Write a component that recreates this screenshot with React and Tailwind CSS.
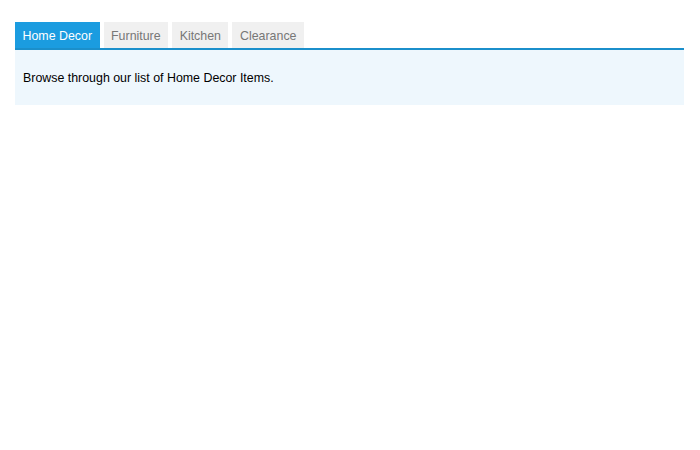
import React, { useState } from "react";

const tabs = [
  { id: "home", label: "Home Decor", text: "Browse through our list of Home Decor Items." },
  { id: "furniture", label: "Furniture", text: "Browse through our list of Furniture." },
  { id: "kitchen", label: "Kitchen", text: "Browse through our list of Kitchen Items." },
  { id: "clearance", label: "Clearance", text: "Browse through our Clearance Items." },
];

export default function App() {
  const [active, setActive] = useState("home");
  const current = tabs.find((t) => t.id === active);

  return (
    <div className="min-h-screen bg-white pl-[15px] pr-[16px] pt-[22px] font-['Liberation_Sans',Arial,sans-serif]">
      {/* tab bar */}
      <div className="flex gap-1 border-b-2 border-[#1b8fcb]">
        {tabs.map((t) => (
          <button
            key={t.id}
            onClick={() => setActive(t.id)}
            className={
              t.id === active
                ? "h-[26px] px-[7.5px] pt-[2px] text-[12.4px] bg-[#1b9ce0] text-white"
                : "h-[26px] px-[7.5px] pt-[2px] text-[12.4px] bg-[#f0f0f0] text-[#777777]"
            }
          >
            {t.label}
          </button>
        ))}
      </div>

      {/* panel */}
      <div className="h-[55px] bg-[#eef7fd] px-2 pt-[19px] text-[12.4px] text-black">
        {current.text}
      </div>
    </div>
  );
}
